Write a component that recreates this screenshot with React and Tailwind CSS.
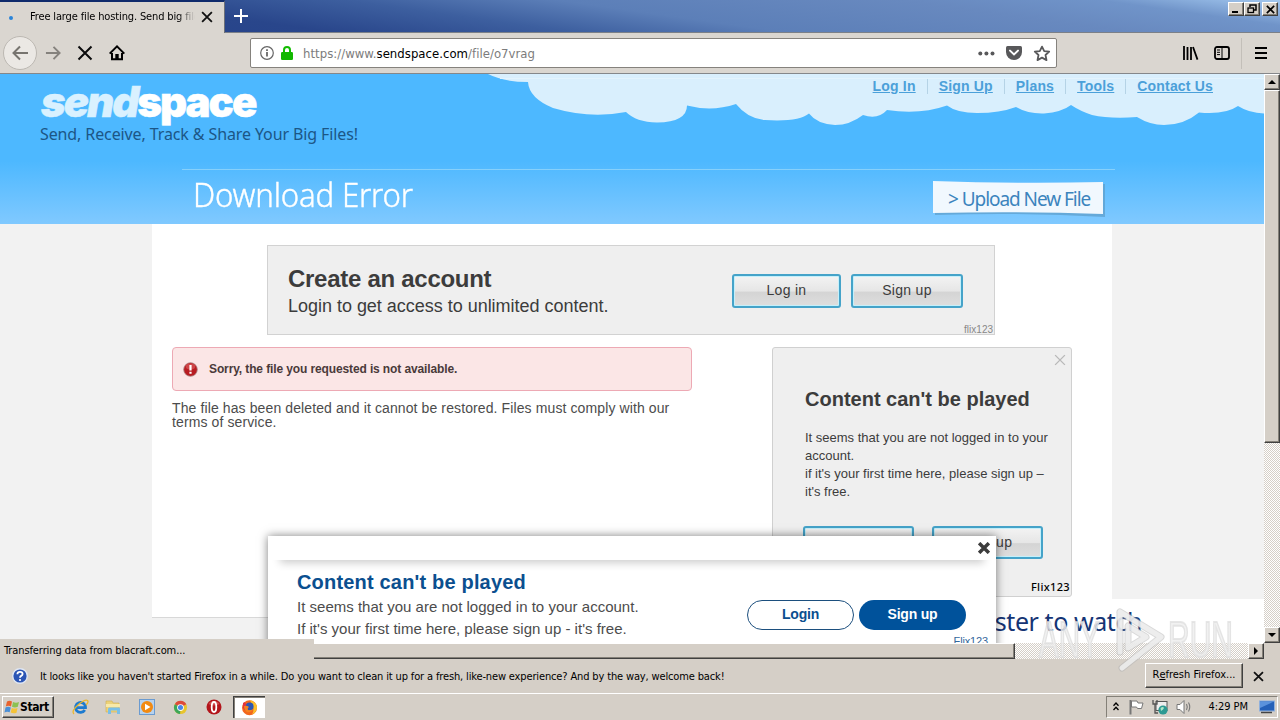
import React from "react";

const navLinks = ["Log In", "Sign Up", "Plans", "Tools", "Contact Us"];

const raised =
  "bg-[#d5cfc7] border border-t-white border-l-white border-r-[#404040] border-b-[#404040] shadow-[inset_-1px_-1px_0_#848078]";

const track =
  "bg-[repeating-conic-gradient(#ffffff_0_25%,#d5cfc7_0_50%)] bg-[length:2px_2px]";

function CloseIcon({ size, stroke, width = 2 }) {
  return (
    <svg width={size} height={size} viewBox="0 0 16 16">
      <path d="M1.5 1.5 L14.5 14.5 M14.5 1.5 L1.5 14.5" stroke={stroke} strokeWidth={width} />
    </svg>
  );
}

function TitleBar() {
  return (
    <div className="flex h-[33px] bg-[linear-gradient(8deg,#24428a_0%,#29468b_22%,#3d5f9f_38%,#5c7fb8_52%,#6889bf_75%,#7094c9_88%,#a3c8ef_100%)] border-b border-[#7b8088]">
      <div className="flex items-center w-[225px] h-[33px] border-t-2 border-t-[#0f2b6c] border-r border-r-[#6c7078] bg-[#dad6d0]">
        <div className="w-1 h-1 rounded-full bg-[#2a84d8] ml-[9px]" />
        <div className="ml-[17px] w-[165px] overflow-hidden whitespace-nowrap text-[11px] tracking-[-0.14px] text-transparent bg-clip-text bg-[linear-gradient(90deg,#000_90%,#dad6d0_100%)]">
          Free large file hosting. Send big files
        </div>
        <div className="ml-[6px] mt-[-2px]">
          <CloseIcon size={12} stroke="#111" width={2.4} />
        </div>
      </div>
      <svg className="ml-[8px] mt-[8px]" width="16" height="16" viewBox="0 0 16 16">
        <path d="M8 1 V15 M1 8 H15" stroke="#fff" strokeWidth="2" />
      </svg>
      <div className="ml-auto mt-[2px] mr-[2px] flex h-[14px]">
        <div className={`w-4 h-[14px] ${raised}`}>
          <div className="w-[6px] h-[2px] bg-black ml-[3px] mt-[8px]" />
        </div>
        <div className={`w-4 h-[14px] mr-[2px] ${raised}`}>
          <svg width="14" height="12" viewBox="0 0 14 12">
            <path d="M5 4 V2 H11 V7 H9 M5 2 H11" stroke="#000" strokeWidth="1.5" fill="none" />
            <rect x="3" y="5" width="5.5" height="4.5" stroke="#000" strokeWidth="1.3" fill="none" />
          </svg>
        </div>
        <div className={`w-4 h-[14px] flex items-center justify-center ${raised}`}>
          <CloseIcon size={9} stroke="#000" width={3} />
        </div>
      </div>
    </div>
  );
}

function Toolbar() {
  return (
    <div className="flex items-center h-[41px] bg-[#dad6d0] border-b border-[#85878a]">
      <div className="w-[34px] h-[34px] ml-[3px] rounded-full border border-[#bcb8b2] bg-[#ebe8e4] flex items-center justify-center">
        <svg width="18" height="16" viewBox="0 0 18 16">
          <path d="M9 1.5 L2.5 8 L9 14.5 M2.5 8 H17" stroke="#77746f" strokeWidth="2" fill="none" />
        </svg>
      </div>
      <svg className="ml-[8px]" width="17" height="16" viewBox="0 0 18 16">
        <path d="M9 1.5 L15.5 8 L9 14.5 M15.5 8 H1" stroke="#85827d" strokeWidth="2" fill="none" />
      </svg>
      <div className="ml-[15px]">
        <CloseIcon size={16} stroke="#0c0c0d" width={2} />
      </div>
      <svg className="ml-[16px]" width="16" height="16" viewBox="0 0 16 16">
        <path d="M0.7 8.6 L8 1.4 L15.3 8.6" stroke="#000" strokeWidth="2" fill="none" />
        <path d="M3 8 V14.2 H13 V8" stroke="#000" strokeWidth="2" fill="none" />
        <path d="M6.3 14 V9 H9.7 V14 Z" fill="#000" />
      </svg>
      <div className="ml-[125px] w-[807px] h-[30px] bg-white border border-[#85827d] rounded-[2px] flex items-center">
        <svg className="ml-[9px]" width="14" height="14" viewBox="0 0 14 14">
          <circle cx="7" cy="7" r="6.3" stroke="#666" strokeWidth="1.2" fill="none" />
          <path d="M7 6 V10.5 M7 3.3 V4.9" stroke="#555" strokeWidth="1.6" />
        </svg>
        <svg className="ml-[7px]" width="12" height="14" viewBox="0 0 12 14">
          <path d="M3 7 V4 A3 3 0 0 1 9 4 V7" stroke="#12bc00" strokeWidth="2" fill="none" />
          <rect x="0" y="6" width="12" height="8" rx="1.2" fill="#12b800" />
        </svg>
        <div className="ml-[10px] mt-[1px] text-[13px] tracking-[0.03px] text-[#7c7c7c] whitespace-nowrap">
          https://www.<span className="text-black">sendspace.com</span>/file/o7vrag
        </div>
        <div className="ml-auto mr-[5px] flex items-center">
          <svg width="17" height="5" viewBox="0 0 17 5">
            <circle cx="2.3" cy="2.5" r="2" fill="#58585a" />
            <circle cx="8.4" cy="2.5" r="2" fill="#58585a" />
            <circle cx="14.5" cy="2.5" r="2" fill="#58585a" />
          </svg>
          <svg className="ml-[11px]" width="16" height="14" viewBox="0 0 16 14">
            <path d="M1.5 0 H14.5 Q16 0 16 1.5 V6 A8 8 0 0 1 0 6 V1.5 Q0 0 1.5 0 Z" fill="#58585a" />
            <path d="M4 4.6 L8 8.4 L12 4.6" stroke="#fff" strokeWidth="2" fill="none" strokeLinecap="round" />
          </svg>
          <svg className="ml-[11px]" width="18" height="17" viewBox="0 0 18 17">
            <path d="M9 1.6 L11.2 6.1 L16.2 6.7 L12.5 10 L13.5 15.1 L9 12.6 L4.5 15.1 L5.5 10 L1.8 6.7 L6.8 6.1 Z" stroke="#58585a" strokeWidth="1.8" fill="none" strokeLinejoin="round" />
          </svg>
        </div>
      </div>
      <svg className="ml-[125px]" width="17" height="14" viewBox="0 0 17 14">
        <path d="M2 0 V14 M5.500 1 V14 M9 1 V14 M11 1 L15.500 13.600" stroke="#000" strokeWidth="1.800" />
      </svg>
      <svg className="ml-[15px]" width="16" height="14" viewBox="0 0 16 14">
        <rect x="1" y="1" width="14" height="12" rx="2" stroke="#000" strokeWidth="1.800" fill="none" />
        <path d="M8 1 V13 M3 4 H6 M3 6.3 H6 M3 8.6 H6" stroke="#000" strokeWidth="1" />
      </svg>
      <div className="ml-[11px] w-px h-[31px] bg-[#c3bfb9]" />
      <svg className="ml-[13px]" width="12" height="12" viewBox="0 0 12 12">
        <path d="M0 1 H12 M0 6 H12 M0 11 H12" stroke="#000" strokeWidth="2" />
      </svg>
    </div>
  );
}

function Clouds() {
  return (
    <svg className="absolute left-0 top-0" width="1264" height="60" viewBox="0 74 1264 60">
      <path
        d="M488 74 Q504 82 528 82 Q529 98 553 108 Q590 119 626 112 Q636 122 657 122.500 Q687 122 687 105.500 Q712 112 736 104 Q748 119 765 120 Q799 122 809 113.500 Q817 124 835 125 Q850 125 863 115 Q878 120 887 110 Q920 115 947 105.500 Q957 113 977 113 Q1000 113 1016 107 Q1028 114 1044 113.500 Q1062 112 1071 105 Q1080 111 1092 115 Q1110 119 1137 117 Q1150 125 1164 125 Q1184 125 1199 112.500 Q1225 115 1238 106 Q1249 113 1264 113.500 V74 Z"
        fill="#d9effd"
      />
      <path d="M500 78.500 H1264" stroke="#e3f3fd" strokeWidth="1" />
    </svg>
  );
}

function Header() {
  return (
    <div className="relative h-[150px] bg-[linear-gradient(180deg,#4db8ff_0%,#4db8ff_58%,#80c9ff_100%)]">
      <Clouds />
      <div className="relative flex justify-between">
        <div className="ml-[40px]">
          <div className="h-[50px] leading-[56px] pl-px font-[Inter] font-black text-[42px] tracking-[-2px] text-white whitespace-nowrap [-webkit-text-stroke:0.5px_currentColor]">
            <span className="italic text-[#d9f1ff]">send</span>space
          </div>
          <div className="font-['Noto_Sans'] text-base leading-5 tracking-[-0.11px] text-[#1c5686] whitespace-nowrap">
            Send, Receive, Track &amp; Share Your Big Files!
          </div>
        </div>
        <div className="flex mr-[40px] mt-[5px] h-[15px] font-['Liberation_Sans'] font-bold text-sm leading-[15px] tracking-[0.18px] text-[#4ba0d9]">
          {navLinks.map((link, i) => (
            <div
              key={link}
              className={
                i === navLinks.length - 1
                  ? "px-[11px]"
                  : "px-[11px] border-r border-[#b5d3e6]"
              }
            >
              <span className="underline">{link}</span>
            </div>
          ))}
        </div>
      </div>
      <div className="relative ml-[182px] w-[933px] mt-[25px] border-t border-[#86d0fb] flex justify-between">
        <div className="ml-[11px] mt-[4px] origin-left scale-x-[0.945] font-['Noto_Sans'] font-light text-[33px] leading-[42px] tracking-[-0.2px] text-white whitespace-nowrap [-webkit-text-stroke:0.4px_#fff]">
          Download Error
        </div>
        <div className="relative mr-[9px] mt-[10px] w-[174px] h-[38px]">
          <svg className="absolute left-0 top-0" width="174" height="38" viewBox="0 0 174 38">
            <path d="M3 4 L173 4 L173 37 Q90 32 3 35 Z" fill="#5c9cc9" opacity="0.7" />
            <path d="M1 1 Q90 4 171 2 L171 34 Q90 31 1 33 Z" fill="#f1f8fe" />
          </svg>
          <div className="relative pl-[16px] pt-[5px] font-['Noto_Sans'] text-[19px] leading-7 tracking-[-1.05px] text-[#3b84bd] whitespace-nowrap">
            &gt; Upload New File
          </div>
        </div>
      </div>
    </div>
  );
}

function GlossyButton({ children, className }) {
  return (
    <div
      className={`flex items-center justify-center pb-[2px] rounded-[3px] border-2 border-[#45a3c9] bg-[linear-gradient(180deg,#f3f3f3_0%,#e6e6e6_50%,#d4d4d4_54%,#dedede_100%)] shadow-[inset_0_0_0_1px_#c4f0fb] font-['Liberation_Sans'] text-sm tracking-[0.3px] text-[#3c3c3c] ${className}`}
    >
      {children}
    </div>
  );
}

function AccountBanner() {
  return (
    <div className="ml-[115px] w-[728px] h-[90px] bg-[#efefef] border border-[#d2d2d2] flex font-['Liberation_Sans'] text-[#3c3c3c]">
      <div className="ml-[20px] mt-[18px] whitespace-nowrap">
        <div className="text-[24px] leading-[30px] font-bold tracking-[-0.28px]">Create an account</div>
        <div className="text-[18px] leading-6 tracking-[-0.02px]">Login to get access to unlimited content.</div>
      </div>
      <div className="ml-auto flex flex-col items-end">
        <div className="flex gap-[10px] mt-[28px] mr-[31px]">
          <GlossyButton className="w-[109px] h-[34px]">Log in</GlossyButton>
          <GlossyButton className="w-[112px] h-[34px]">Sign up</GlossyButton>
        </div>
        <div className="mt-auto mb-[-1px] mr-[1px] text-[10px] leading-[10px] text-[#888]">flix123</div>
      </div>
    </div>
  );
}

function PlayerCard() {
  return (
    <div className="w-[300px] h-[250px] rounded-[3px] bg-[#efefef] border border-[#d0d0d0] font-['Liberation_Sans'] text-[#3c3c3c] flex flex-col">
      <div className="self-end mr-[5px] mt-[6px] h-3">
        <CloseIcon size={12} stroke="#b9b9b9" width={1.8} />
      </div>
      <div className="ml-[32px] mt-[21px] text-[20px] leading-6 font-bold">Content can't be played</div>
      <div className="ml-[32px] mt-[18px] w-[256px] text-[13px] leading-[18px]">
        It seems that you are not logged in to your account.
        <br />
        if it's your first time here, please sign up – it's free.
      </div>
      <div className="ml-[30px] mt-[25px] flex gap-[18px]">
        <GlossyButton className="w-[111px] h-[33px]">Log in</GlossyButton>
        <GlossyButton className="w-[111px] h-[33px]">Sign up</GlossyButton>
      </div>
      <div className="self-end mt-auto mr-[1px] mb-[2px] font-['Noto_Sans'] font-medium text-[11px] leading-[14px] tracking-[0.35px] text-black">
        Flix123
      </div>
    </div>
  );
}

function MainContent() {
  return (
    <div className="mx-auto w-[960px] h-[394px] bg-white border-b border-[#d8d8d8] pt-[21px]">
      <AccountBanner />
      <div className="mt-[12px] ml-[20px] mr-[40px] flex justify-between">
        <div className="w-[520px]">
          <div className="h-[44px] rounded-[4px] border border-[#eda9b4] bg-[#fbe6e6] flex items-center">
            <svg className="ml-[10px]" width="15" height="15" viewBox="0 0 15 15">
              <circle cx="7.500" cy="7.500" r="6.800" fill="#b81c22" stroke="#a88080" strokeWidth="0.8" />
              <ellipse cx="7.500" cy="4.500" rx="4.800" ry="3" fill="#cf4548" />
              <path d="M7.500 3 V8.400 M7.500 9.800 V11.800" stroke="#fff" strokeWidth="2.200" />
            </svg>
            <div className="ml-[11px] font-['Liberation_Sans'] font-bold text-xs tracking-[-0.12px] text-[#4a3a3a]">
              Sorry, the file you requested is not available.
            </div>
          </div>
          <div className="mt-[10px] font-['Liberation_Sans'] text-sm leading-[14px] tracking-[0.11px] text-[#4c4c4c] whitespace-nowrap">
            The file has been deleted and it cannot be restored. Files must comply with our
            <br />
            terms of service.
          </div>
        </div>
        <PlayerCard />
      </div>
    </div>
  );
}

function BottomPopup() {
  return (
    <div className="absolute left-[268px] top-[462px] w-[728px] h-[120px] bg-white shadow-[0_0_9px_rgba(0,0,0,0.5)] font-['Liberation_Sans']">
      <div className="relative h-[24px]">
        <div className="absolute inset-x-[12px] bottom-0 h-[12px] shadow-[0_3px_8px_rgba(0,0,0,0.2)]" />
        <div className="relative h-[24px] bg-white flex justify-end">
          <div className="mt-[6px] mr-[6px]">
            <CloseIcon size={12} stroke="#3c3c3c" width={4.6} />
          </div>
        </div>
      </div>
      <div className="relative flex">
        <div className="ml-[29px] mt-[10px] whitespace-nowrap">
          <div className="text-[20px] leading-6 font-bold tracking-[0.18px] text-[#0b4f8f]">Content can't be played</div>
          <div className="mt-[2px] text-[15px] leading-[22px] tracking-[0.01px] text-[#4c4c4c]">
            It seems that you are not logged in to your account.
            <br />
            If it's your first time here, please sign up - it's free.
          </div>
        </div>
        <div className="ml-auto flex flex-col items-end">
          <div className="mt-[40px] mr-[30px] flex gap-[5px] text-sm font-bold tracking-[-0.2px]">
            <div className="w-[107px] h-[30px] pb-[2px] rounded-full border border-[#1c4f7e] text-[#0b4f8f] flex items-center justify-center">
              Login
            </div>
            <div className="w-[107px] h-[30px] pb-[2px] rounded-full bg-[#00529b] text-white flex items-center justify-center">
              Sign up
            </div>
          </div>
          <div className="mt-[4px] mr-[8px] text-[11px] leading-[14px] tracking-[-0.15px] text-[#33679c]">Flix123</div>
        </div>
      </div>
    </div>
  );
}

function Page() {
  return (
    <div className="relative w-[1264px] h-[569px] overflow-hidden bg-[#f2f2f2]">
      <Header />
      <MainContent />
      <div className="absolute left-[268px] right-0 top-[525px] h-[45px] bg-white">
        <div className="mt-[4px] text-right mr-[122px] font-['Noto_Sans'] text-[25px] leading-9 tracking-[-0.42px] text-[#153474] whitespace-nowrap">
          Register to watch
        </div>
      </div>
      <BottomPopup />
    </div>
  );
}

function VerticalScrollbar() {
  return (
    <div className={`w-4 h-[569px] flex flex-col ${track}`}>
      <div className={`h-4 flex items-center justify-center ${raised}`}>
        <svg width="8" height="4" viewBox="0 0 8 4">
          <path d="M0 4 L4 0 L8 4 Z" />
        </svg>
      </div>
      <div className={`h-[353px] ${raised}`} />
      <div className={`h-4 mt-auto flex items-center justify-center ${raised}`}>
        <svg width="8" height="4" viewBox="0 0 8 4">
          <path d="M0 0 L4 4 L8 0 Z" />
        </svg>
      </div>
    </div>
  );
}

function HorizontalScrollbar() {
  return (
    <div className="flex h-4 bg-[#d5cfc7]">
      <div className={`w-[1264px] flex ${track}`}>
        <div className={`w-[1015px] h-4 ${raised}`} />
        <div className={`ml-auto w-4 h-4 flex items-center justify-center ${raised}`}>
          <svg width="4" height="8" viewBox="0 0 4 8">
            <path d="M0 0 L4 4 L0 8 Z" />
          </svg>
        </div>
      </div>
    </div>
  );
}

function Notification() {
  return (
    <div className="flex items-center h-[34px] bg-[#d5cfc7] text-[11px] text-black">
      <svg className="ml-[12px]" width="16" height="16" viewBox="0 0 16 16">
        <circle cx="8" cy="8" r="7.300" fill="#2b55b5" stroke="#dfe6f2" strokeWidth="1.400" />
        <path d="M5.400 6.200 Q5.400 3.900 8 3.900 Q10.600 3.900 10.600 6 Q10.600 7.200 9.200 7.900 Q8 8.500 8 9.700" stroke="#fff" strokeWidth="1.800" fill="none" />
        <circle cx="8" cy="12" r="1.100" fill="#fff" />
      </svg>
      <div className="ml-[12px] mt-[2px] tracking-[-0.142px] whitespace-nowrap">
        It looks like you haven't started Firefox in a while. Do you want to clean it up for a fresh, like-new experience? And by the way, welcome back!
      </div>
      <div className={`ml-auto mt-[-2px] w-[98px] h-[25px] flex items-center justify-center whitespace-nowrap ${raised}`}>
        R<span className="underline">e</span>fresh Firefox...
      </div>
      <div className="ml-[10px] mr-[16px]">
        <CloseIcon size={11} stroke="#111" width={2.6} />
      </div>
    </div>
  );
}

function QuickLaunch() {
  return (
    <div className="flex items-center ml-[18px]">
      <svg width="17" height="17" viewBox="0 0 17 17">
        <path d="M12.800 11 A5 5 0 1 1 13.500 8.600 H5" stroke="#1d7bd0" strokeWidth="2.800" fill="none" />
        <path d="M2 15 Q-1 12 6 6 Q13 0 15.500 1.500 Q17 3 14 6" stroke="#e9b72d" strokeWidth="1.300" fill="none" />
      </svg>
      <svg className="ml-[16px]" width="17" height="16" viewBox="0 0 17 16">
        <path d="M1 2 H7 L8 4 H14 V13 H1 Z" fill="#ecd279" stroke="#d0b050" strokeWidth="0.600" />
        <path d="M1 5 H15 V8 H1 Z" fill="#f8e9a8" />
        <path d="M3 15 V10 Q3 8.500 4.500 8.500 H13.500 Q15 8.500 15 10 V15 H12 V11.500 H6 V15 Z" fill="#79bfe8" />
      </svg>
      <svg className="ml-[17px]" width="16" height="16" viewBox="0 0 16 16">
        <rect x="0.500" y="0.500" width="15" height="15" fill="#b7d2ee" stroke="#6b9bd0" />
        <circle cx="8" cy="8" r="6" fill="#f28a12" />
        <path d="M6 4.800 L11.500 8 L6 11.200 Z" fill="#fff" />
      </svg>
      <svg className="ml-[18px]" width="15" height="15" viewBox="0 0 16 16">
        <circle cx="8" cy="8" r="7" fill="#e8c52e" />
        <path d="M8 8 L2 4.400 A7 7 0 0 1 14.200 4.600 Z" fill="#dd4a3b" />
        <path d="M8 8 L2 4.400 A7 7 0 0 0 7.500 15 Z" fill="#3da75a" />
        <circle cx="8" cy="8" r="3.600" fill="#fff" />
        <circle cx="8" cy="8" r="2.700" fill="#4886e8" />
      </svg>
      <svg className="ml-[18px]" width="16" height="16" viewBox="0 0 16 16">
        <circle cx="8" cy="8" r="7.500" fill="#b3151b" />
        <path d="M2.500 5 A6.500 6.500 0 0 1 13.500 5 Q8 8 2.500 5 Z" fill="#cf4a4c" />
        <ellipse cx="8" cy="8" rx="2.300" ry="5" fill="none" stroke="#fff" strokeWidth="1.800" />
      </svg>
      <div className="ml-[11px] w-[32px] h-[22px] bg-white border-t border-l border-[#404040] shadow-[inset_1px_1px_0_#848078] flex items-center justify-center">
        <svg width="17" height="17" viewBox="0 0 17 17">
          <circle cx="8.500" cy="8.800" r="7.500" fill="#f2661c" />
          <path d="M9 1 Q16 3 16 9 Q15 14 11 15.500 Q14 10 11 6 Z" fill="#fbc02a" />
          <path d="M2 4 L3.500 3 L5 5 L8 4 Q10 7 7 8 L8 11 Q4 13 2 9 Z" fill="#e2333f" />
          <circle cx="8.700" cy="7.400" r="3.900" fill="#2b57b4" />
          <path d="M3 7 Q6 6 8 8 Q6 9 7 11 Q9 12 12 10 Q10 14 6 13 Q3 11 3 7 Z" fill="#f4821f" />
        </svg>
      </div>
    </div>
  );
}

function Taskbar() {
  return (
    <div className="flex items-center h-[27px] bg-[#d5cfc7] border-t border-white text-[11px] text-black">
      <div className={`ml-[2px] w-[52px] h-[22px] flex items-center ${raised}`}>
        <svg className="ml-px" width="16" height="16" viewBox="0 0 16 16">
          <path d="M3 2.500 Q5.500 1 8 2.500 L7 7.500 Q4.500 6 1.800 7.500 Z" fill="#e8622c" />
          <path d="M9 3 Q12 4.500 15 3 L13.800 7.800 Q11 9 8 7.800 Z" fill="#8cc152" />
          <path d="M1.500 8.500 Q4 7 6.800 8.500 L5.700 13.300 Q3 12 0.500 13.500 Z" fill="#4a8fd6" />
          <path d="M7.800 8.900 Q10.500 10 13.500 8.900 L12.500 13.800 Q9.500 15 6.700 13.500 Z" fill="#f5c338" />
        </svg>
        <span className="font-bold text-xs tracking-[-0.4px]">Start</span>
      </div>
      <QuickLaunch />
      <div className="ml-auto mr-[2px] w-[172px] h-[22px] flex items-center border border-t-[#848078] border-l-[#848078] border-r-white border-b-white">
        <svg className="ml-[6px] mb-[2px]" width="6" height="9" viewBox="0 0 6 9">
          <path d="M0.500 3.700 L3 1 L5.500 3.700 M0.500 8 L3 5.300 L5.500 8" stroke="#000" strokeWidth="1.300" fill="none" />
        </svg>
        <svg className="ml-[10px]" width="15" height="16" viewBox="0 0 15 16">
          <path d="M1.500 1 V15.500" stroke="#777" strokeWidth="2" />
          <path d="M2.500 2 H8 L9 4 H14 L12.500 9.500 H8.500 L7.500 8 H2.500 Z" fill="#fff" stroke="#777" />
        </svg>
        <svg className="ml-[8px]" width="17" height="16" viewBox="0 0 17 16">
          <rect x="4" y="2.500" width="11" height="9" fill="#eee" stroke="#555" />
          <path d="M1 1 V5 H5 V1 M3 5 V14 H6" stroke="#555" strokeWidth="1.300" fill="none" />
          <circle cx="11" cy="11" r="4.600" fill="#2d9a93" />
          <path d="M8.500 9 Q11 7 12 9 Q11 11 9 12 Z" fill="#aee6c8" />
        </svg>
        <svg className="ml-[7px]" width="17" height="16" viewBox="0 0 17 16">
          <path d="M1 5.500 H4 L8 1.500 V14.500 L4 10.500 H1 Z" fill="#fff" stroke="#777" />
          <path d="M10.500 5 Q12 8 10.500 11 M12.500 3.500 Q15 8 12.500 12.500" stroke="#777" strokeWidth="1.100" fill="none" />
        </svg>
        <div className="ml-auto mt-px whitespace-nowrap tracking-[-0.05px]">4:29 PM</div>
        <svg className="ml-[11px] mr-[2px]" width="16" height="14" viewBox="0 0 16 14">
          <rect x="0.500" y="1" width="15" height="10" fill="#2560b8" stroke="#8fb0dd" />
          <path d="M1 1.500 H15 L1 8 Z" fill="#5b92dc" />
          <path d="M2 12.500 H13" stroke="#444" strokeWidth="1.500" />
        </svg>
      </div>
    </div>
  );
}

function Watermark() {
  return (
    <div className="absolute left-[1039px] top-[606px] flex items-center h-[68px] font-['Liberation_Sans'] text-[50px] leading-[68px] text-[#eeeeee]/80 [-webkit-text-stroke:2px_rgba(222,222,222,0.75)]">
      <span className="inline-block origin-left scale-x-[0.59] w-[73px]">ANY</span>
      <svg width="56" height="68" viewBox="0 0 56 68">
        <path d="M8 6 V46 M8 6 L49 31 L10 62 M16 20 V42 L34 31 Z" stroke="rgba(180,180,180,0.5)" strokeWidth="7" fill="none" strokeLinejoin="round" strokeLinecap="round" />
        <path d="M8 6 V46 M8 6 L49 31 L10 62 M16 20 V42 L34 31 Z" stroke="rgba(240,240,240,0.85)" strokeWidth="5" fill="none" strokeLinejoin="round" strokeLinecap="round" />
      </svg>
      <span className="inline-block origin-left scale-x-[0.6] w-[64px]">RUN</span>
    </div>
  );
}

function App() {
  return (
    <div className="relative w-[1280px] h-[720px] overflow-hidden font-['DejaVu_Sans_Condensed','DejaVu_Sans',sans-serif] [font-stretch:condensed]">
      <TitleBar />
      <Toolbar />
      <div className="flex">
        <Page />
        <VerticalScrollbar />
      </div>
      <HorizontalScrollbar />
      <Notification />
      <Taskbar />
      <div className="absolute left-0 top-[639px] w-[314px] h-[20px] bg-[#d5cfc7] pl-[4px] text-[11px] leading-[23px] tracking-[-0.1px] text-black">
        Transferring data from blacraft.com...
      </div>
      <Watermark />
    </div>
  );
}

export default App;
